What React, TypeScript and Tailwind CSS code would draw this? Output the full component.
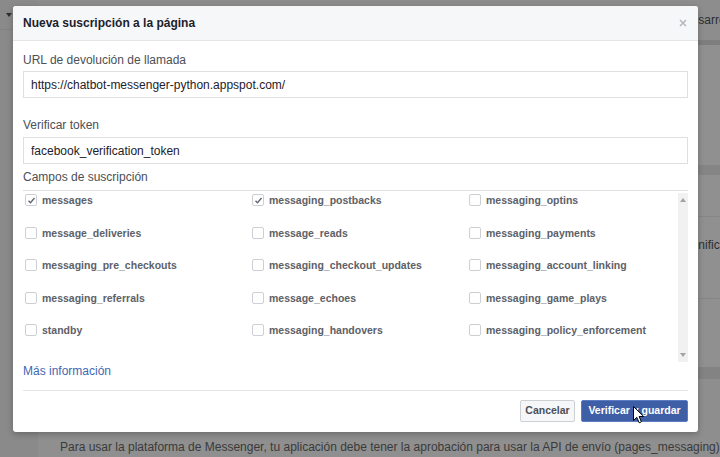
import { useState } from "react";

const fields = [
  ["messages", "messaging_postbacks", "messaging_optins"],
  ["message_deliveries", "message_reads", "messaging_payments"],
  ["messaging_pre_checkouts", "messaging_checkout_updates", "messaging_account_linking"],
  ["messaging_referrals", "message_echoes", "messaging_game_plays"],
  ["standby", "messaging_handovers", "messaging_policy_enforcement"],
];

function Checkbox({ label, checked, onToggle }: { label: string; checked: boolean; onToggle: () => void }) {
  return (
    <label className="flex h-[16px] cursor-pointer items-center gap-[5px]" onClick={onToggle}>
      <span className="flex h-[12px] w-[12px] items-center justify-center rounded-[2px] border border-[#ccd0d5] bg-white">
        {checked && (
          <svg width="9" height="9" viewBox="0 0 9 9">
            <path d="M1.5 4.8 L3.5 6.8 L7.5 2" fill="none" stroke="#606770" strokeWidth="1.4" />
          </svg>
        )}
      </span>
      <span className="text-[10.5px] font-bold leading-[16px] text-[#5d6168]">{label}</span>
    </label>
  );
}

export default function App() {
  const [checked, setChecked] = useState<Record<string, boolean>>({
    messages: true,
    messaging_postbacks: true,
  });

  const toggle = (name: string) => setChecked((prev) => ({ ...prev, [name]: !prev[name] }));

  return (
    <div className="relative h-[457px] w-[720px] overflow-hidden bg-[#8f8f8f] font-['Liberation_Sans',Arial,sans-serif]">
      {/* page behind the overlay */}
      <div className="flex h-full">
        <aside className="w-[38px] shrink-0 bg-[#8a8a8a]">
          <div className="flex h-[30px] items-center border-b border-[#828282] pl-[6px]">
            <svg width="6" height="4" viewBox="0 0 6 4">
              <path d="M0 0 L6 0 L3 4 Z" fill="#2f2f2f" />
            </svg>
          </div>
        </aside>
        <main className="flex min-w-0 flex-1 flex-col overflow-hidden">
          <div className="flex h-[40px] items-center whitespace-nowrap bg-[#8d8d8d] text-[12px] text-[#2e2e2e]">
            <span className="w-[645px] shrink-0" />
            <span>Desarrolladores</span>
          </div>
          <div className="h-[5px] bg-[#7e7e7e]" />
          <div className="h-[120px] bg-[#909090]" />
          <div className="h-[10px] bg-[#858585]" />
          <div className="h-[42px] border-b border-[#868686] bg-[#909090]" />
          <div className="flex h-[82px] items-start whitespace-nowrap border-b border-[#868686] bg-[#909090] pt-[20px] text-[12px] leading-[16px] text-[#2e2e2e]">
            <span className="w-[645px] shrink-0" />
            <span>significado</span>
          </div>
          <div className="h-[68px] bg-[#909090]" />
          <div className="h-[12px] bg-[#838383]" />
          <div className="h-[60px] bg-[#8e8e8e]" />
          <p className="whitespace-nowrap pl-[22px] text-[12px] leading-[16px] text-[#3a3a3a]">
            Para usar la plataforma de Messenger, tu aplicación debe tener la aprobación para usar la API de envío (pages_messaging).
          </p>
        </main>
      </div>

      {/* modal */}
      <div className="absolute left-[13px] top-[6px] flex h-[426px] w-[685px] flex-col rounded-[3px] bg-white shadow-[0_2px_6px_rgba(0,0,0,0.25)]">
        <div className="flex h-[35px] items-center justify-between rounded-t-[3px] border-b border-[#e5e5e5] bg-[#f6f7f9] pl-[10px] pr-[11px]">
          <h2 className="text-[12px] font-bold text-[#1d2129]">Nueva suscripción a la página</h2>
          <svg width="8" height="8" viewBox="0 0 8 8">
            <path d="M1 1 L7 7 M7 1 L1 7" stroke="#b4b8bf" strokeWidth="1.6" />
          </svg>
        </div>

        <div className="flex flex-1 flex-col px-[10px]">
          <label className="mt-[11px] text-[12px] leading-[16px] text-[#4b4f56]">URL de devolución de llamada</label>
          <input
            className="mt-[3px] h-[27px] border border-[#dddfe2] px-[7px] text-[12px] text-[#1d2129] outline-none"
            defaultValue="https://chatbot-messenger-python.appspot.com/"
          />
          <label className="mt-[19px] text-[12px] leading-[16px] text-[#4b4f56]">Verificar token</label>
          <input
            className="mt-[4px] h-[27px] border border-[#dddfe2] px-[7px] text-[12px] text-[#1d2129] outline-none"
            defaultValue="facebook_verification_token"
          />
          <div className="mt-[5px] border-b border-[#dddfe2] pb-[5px] text-[12px] leading-[16px] text-[#4b4f56]">
            Campos de suscripción
          </div>

          <div className="flex h-[172px]">
            <div className="flex-1 pl-[2px] pt-[1px]">
              {fields.map((row) => (
                <div key={row[0]} className="grid h-[32.5px] grid-cols-[227px_217px_1fr]">
                  {row.map((name) => (
                    <Checkbox key={name} label={name} checked={!!checked[name]} onToggle={() => toggle(name)} />
                  ))}
                </div>
              ))}
            </div>
            <div className="mb-[1px] mt-[2px] flex w-[10px] flex-col items-center justify-between bg-[#f1f1f1] py-[5px]">
              <svg width="6" height="4" viewBox="0 0 6 4">
                <path d="M0 4 L6 4 L3 0 Z" fill="#a3a3a3" />
              </svg>
              <svg width="6" height="4" viewBox="0 0 6 4">
                <path d="M0 0 L6 0 L3 4 Z" fill="#a3a3a3" />
              </svg>
            </div>
          </div>

          <a className="text-[12px] leading-[16px] text-[#4267b2]">Más información</a>

          <div className="mt-[11px] flex justify-end gap-[6px] border-t border-[#e5e5e5] pt-[9px]">
            <button className="flex h-[22px] w-[55px] items-center justify-center rounded-[2px] border border-[#ced0d4] bg-[#f6f7f9] text-[10.5px] font-bold text-[#4b4f56]">
              Cancelar
            </button>
            <button className="flex h-[22px] w-[107px] items-center justify-center rounded-[2px] border border-[#5b7bc2] bg-[#3e5ea6] text-[10.5px] font-bold text-white">
              Verificar y guardar
            </button>
          </div>
        </div>
      </div>

      {/* mouse pointer */}
      <svg className="absolute left-[633px] top-[406px]" width="12" height="18" viewBox="0 0 12 18">
        <path
          d="M0.5 0.5 L0.5 14.5 L3.8 11.3 L6.2 16.8 L8.4 15.8 L6.1 10.5 L10.7 10.5 Z"
          fill="white"
          stroke="black"
          strokeWidth="1"
          strokeLinejoin="round"
        />
      </svg>
    </div>
  );
}
